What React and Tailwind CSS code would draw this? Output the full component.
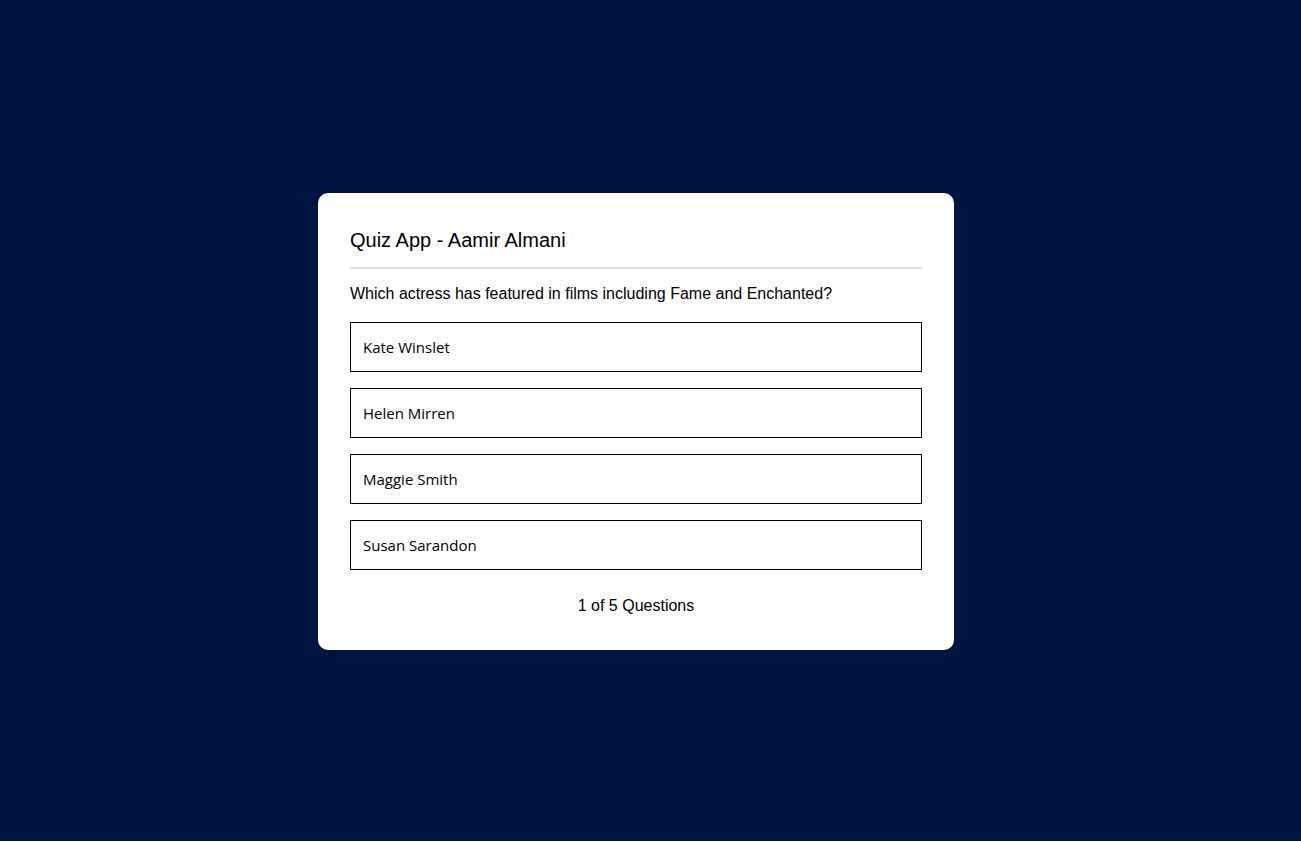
export default function App() {
  const options = ["Kate Winslet", "Helen Mirren", "Maggie Smith", "Susan Sarandon"];
  return (
    <div className="h-[841px] w-full bg-[#001442] flex items-start pt-[193px]">
      <div className="ml-[318px] w-[636px] bg-white rounded-[10px] px-8 pt-[33px] pb-8 flex flex-col">
        <h2 className="text-[20px] leading-[28px] text-black font-['Liberation_Sans',Arial,sans-serif]">
          Quiz App - Aamir Almani
        </h2>
        <div className="mt-[13px] h-[2px] bg-[#e3e3e8]" />
        <p className="mt-[13px] text-[16px] leading-[24px] text-black font-['Liberation_Sans',Arial,sans-serif]">
          Which actress has featured in films including Fame and Enchanted?
        </p>
        <ul className="mt-[16px] flex flex-col gap-4">
          {options.map((o) => (
            <li
              key={o}
              className="h-[50px] border border-black flex items-center pl-3 text-[15px] text-black font-['Open_Sans',sans-serif]"
            >
              {o}
            </li>
          ))}
        </ul>
        <p className="mt-6 text-center text-[16px] leading-[24px] text-black font-['Liberation_Sans',Arial,sans-serif]">
          1 of 5 Questions
        </p>
      </div>
    </div>
  );
}
